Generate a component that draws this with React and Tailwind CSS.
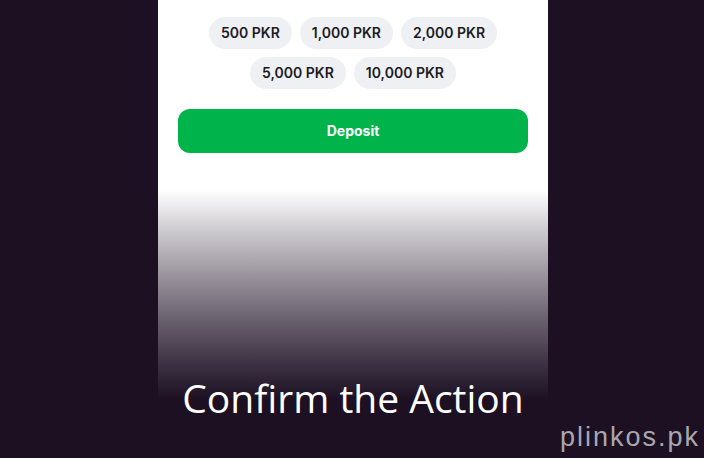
const amounts = [
  ["500 PKR", "1,000 PKR", "2,000 PKR"],
  ["5,000 PKR", "10,000 PKR"],
];

export default function App() {
  return (
    <div className="relative h-[458px] w-[704px] overflow-hidden bg-[#1c1022]">
      <div className="ml-[158px] flex h-full w-[390px] flex-col">
        <div className="bg-white px-5 pt-[17px]">
          <div className="flex flex-col items-center gap-2">
            {amounts.map((row, i) => (
              <div key={i} className="flex gap-2">
                {row.map((a) => (
                  <button
                    key={a}
                    className="h-8 rounded-full bg-[#eff0f3] px-3 font-['Inter',sans-serif] text-sm font-semibold text-[#1b1b1f]"
                  >
                    {a}
                  </button>
                ))}
              </div>
            ))}
          </div>
          <button className="mt-5 h-11 w-full rounded-xl bg-[#00b34b] font-['Inter',sans-serif] text-sm font-bold text-white">
            Deposit
          </button>
          <div className="h-[37px]" />
        </div>
        <div className="h-[210px] bg-gradient-to-b from-white to-[#1c1022]" />
      </div>

      <p className="absolute left-0 right-0 top-[378px] pl-[2px] text-center font-['Open_Sans',sans-serif] text-[39px] leading-none text-white">
        Confirm the Action
      </p>
      <p className="absolute right-[4px] top-[424px] font-['Liberation_Sans',Arial,sans-serif] text-[27px] leading-none tracking-[2px] text-[#a9a7ad]">
        plinkos.pk
      </p>
    </div>
  );
}
